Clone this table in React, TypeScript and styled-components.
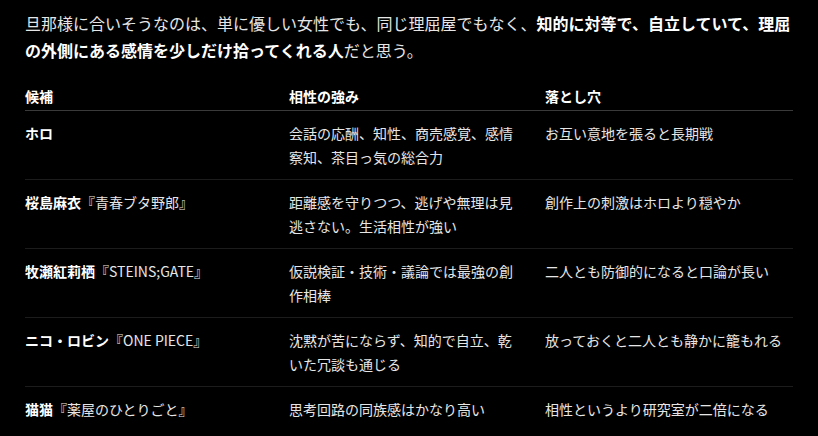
import React from 'react';
import styled, { createGlobalStyle } from 'styled-components';

const GlobalStyle = createGlobalStyle`
    html, body {
        margin: 0;
        padding: 0;
        background: #000;
    }
    body {
        font-family: "Noto Sans CJK JP", "Noto Sans", sans-serif;
        color: #e6e6e6;
    }
`;

const Page = styled.div`
    padding: 10px 23px 20px 25px;
`;

const Lead = styled.p`
    margin: 0 0 13px;
    font-size: 16px;
    line-height: 26.5px;
    color: #e6e6e6;
`;

const Strong = styled.strong`
    font-weight: 700;
    color: #fff;
`;

const Table = styled.table`
    width: 768px;
    table-layout: fixed;
    border-collapse: collapse;
    font-size: 14px;
    line-height: 24px;
`;

// widths are the columns' content widths; padding-right is added on top
const HeadCell = styled.th<{ $w: number }>`
    width: ${p => p.$w}px;
    text-align: left;
    font-weight: 700;
    color: #fff;
    padding: 8px 24px 2px 0;
    border-bottom: 1px solid #3a3a3a;
    &:last-child {
        padding-right: 0;
    }
`;

const Row = styled.tr`
    border-bottom: 1px solid #1c1c1c;
    &:last-child {
        border-bottom: none;
    }
`;

const Cell = styled.td`
    vertical-align: top;
    padding: 10px 24px 10px 0;
    color: #e6e6e6;
    &:last-child {
        padding-right: 0;
    }
`;

const Name = styled.span`
    font-weight: 700;
    color: #fff;
`;

const rows = [
    { name: 'ホロ', work: '', strength: '会話の応酬、知性、商売感覚、感情察知、茶目っ気の総合力', pitfall: 'お互い意地を張ると長期戦' },
    { name: '桜島麻衣', work: '『青春ブタ野郎』', strength: '距離感を守りつつ、逃げや無理は見逃さない。生活相性が強い', pitfall: '創作上の刺激はホロより穏やか' },
    { name: '牧瀬紅莉栖', work: '『STEINS;GATE』', strength: '仮説検証・技術・議論では最強の創作相棒', pitfall: '二人とも防御的になると口論が長い' },
    { name: 'ニコ・ロビン', work: '『ONE PIECE』', strength: '沈黙が苦にならず、知的で自立、乾いた冗談も通じる', pitfall: '放っておくと二人とも静かに籠もれる' },
    { name: '猫猫', work: '『薬屋のひとりごと』', strength: '思考回路の同族感はかなり高い', pitfall: '相性というより研究室が二倍になる' },
];

const App = () => {
    return <Page>
        <GlobalStyle />
        <Lead>
            旦那様に合いそうなのは、単に優しい女性でも、同じ理屈屋でもなく、<Strong>知的に対等で、自立していて、理屈の外側にある感情を少しだけ拾ってくれる人</Strong>だと思う。
        </Lead>
        <Table>
            <thead>
                <tr>
                    <HeadCell $w={240}>候補</HeadCell>
                    <HeadCell $w={232}>相性の強み</HeadCell>
                    <HeadCell $w={248}>落とし穴</HeadCell>
                </tr>
            </thead>
            <tbody>
                {rows.map(r => {
                    return <Row key={r.name}>
                        <Cell><Name>{r.name}</Name>{r.work}</Cell>
                        <Cell>{r.strength}</Cell>
                        <Cell>{r.pitfall}</Cell>
                    </Row>
                })}
            </tbody>
        </Table>
    </Page>
}

export default App;
